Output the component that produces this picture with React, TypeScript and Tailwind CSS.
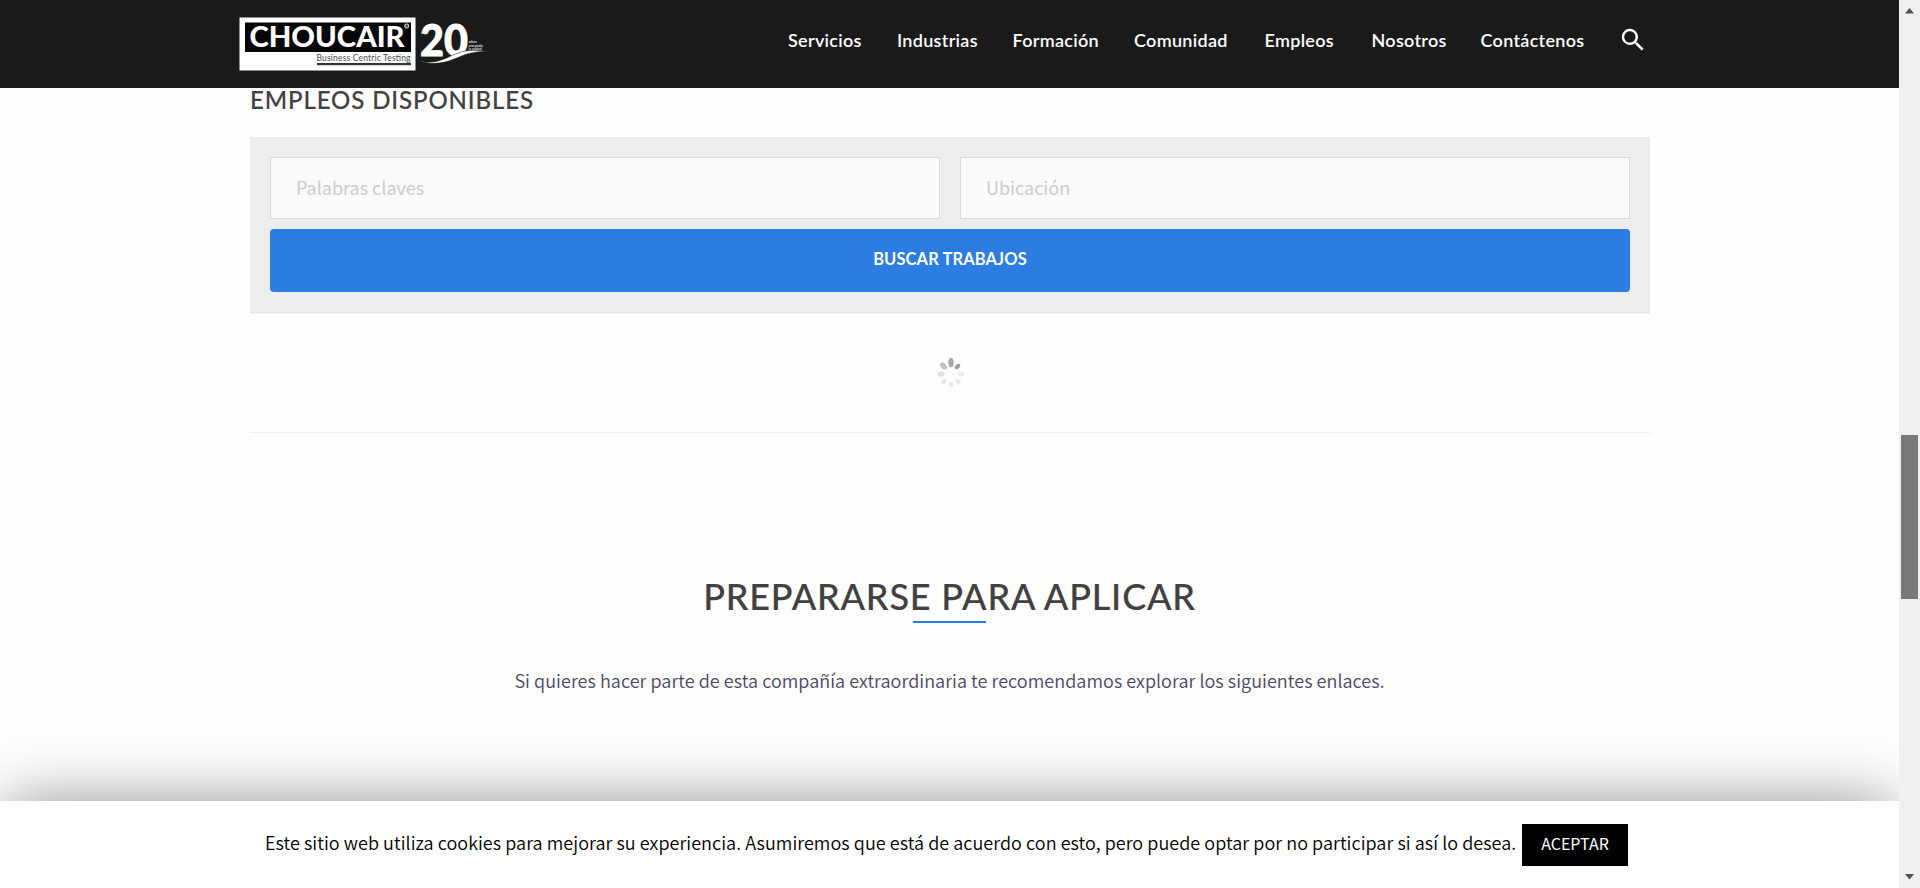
import React from "react";

const navItems = [
  { label: "Servicios", cls: "w-[74px]" },
  { label: "Industrias", cls: "w-[80.5px]" },
  { label: "Formación", cls: "w-[86.5px]" },
  { label: "Comunidad", cls: "w-[95.5px]" },
  { label: "Empleos", cls: "w-[72px]" },
  { label: "Nosotros", cls: "w-[74px]" },
  { label: "Contáctenos", cls: "w-[105px]" },
];

function Logo() {
  return (
    <svg width="250" height="60" viewBox="236 14 250 60" role="img" aria-label="Choucair">
      <rect x="239.500" y="17.500" width="176" height="53" fill="#fff" />
      <rect x="245" y="22.500" width="166" height="29.500" fill="#050608" />
      <text x="249.500" y="47.300" fontFamily="Lato, sans-serif" fontWeight="900" fontSize="29" fill="#fff" textLength="155" lengthAdjust="spacingAndGlyphs">CHOUCAIR</text>
      <circle cx="406.700" cy="26" r="2.100" fill="#555" stroke="#fff" strokeWidth="0.800" />
      <text x="316.500" y="60.500" fontFamily="Lato, sans-serif" fontSize="8.500" fill="#4a4a4a" textLength="94" lengthAdjust="spacing">Business Centric Testing</text>
      <rect x="317" y="63" width="94" height="2.200" fill="#333" />
      <text x="420" y="56" fontFamily="Lato, sans-serif" fontWeight="900" fontSize="43" fill="#fff" stroke="#fff" strokeWidth="0.800" textLength="48" lengthAdjust="spacingAndGlyphs">20</text>
      <path d="M418 60.500 C431 65 443 60 453 55 C465 49.500 476 49.500 487 51.500 C472 51 464 55 454 59 C441 64.500 428 64.500 418 60.500Z" fill="#fff" stroke="#1a1a1a" strokeWidth="0.500" />
      <g fill="#ddd" fontFamily="Lato, sans-serif" fontSize="4" fontWeight="700">
        <text x="468.500" y="42.500">años</text>
        <text x="468.500" y="46.500">creando</text>
        <text x="468.500" y="50" textLength="13" lengthAdjust="spacingAndGlyphs">la calidad</text>
      </g>
    </svg>
  );
}

function Spinner() {
  return (
    <svg width="30" height="34" viewBox="-15 -17 30 34" className="block">
      <ellipse cx="0" cy="-10.300" rx="2.700" ry="4.600" fill="#a8a8a8" />
      <ellipse cx="0" cy="0" rx="2" ry="3.200" fill="#9e9e9e" transform="translate(6.500 -6.500) rotate(45)" />
      <ellipse cx="0" cy="0" rx="2.500" ry="3.200" fill="#ebebeb" transform="translate(10 1) rotate(90)" />
      <ellipse cx="0" cy="0" rx="2.300" ry="3.200" fill="#e9e9e9" transform="translate(7 8.500) rotate(140)" />
      <ellipse cx="0" cy="11.500" rx="2.400" ry="3" fill="#e9e9e9" />
      <ellipse cx="0" cy="0" rx="2.300" ry="3.200" fill="#e6e6e6" transform="translate(-7 8.500) rotate(40)" />
      <ellipse cx="0" cy="0" rx="2.600" ry="3.500" fill="#dfdfdf" transform="translate(-10 1) rotate(90)" />
      <ellipse cx="0" cy="0" rx="2.600" ry="4.200" fill="#c0c0c0" transform="translate(-7.500 -7) rotate(-42)" />
    </svg>
  );
}

const field =
  "h-[62px] w-[670px] border border-[#d9d9d9] bg-[#fafafa] px-[25px] pb-[2px] text-[18px] outline-none placeholder:text-[#cccccc] placeholder:opacity-100";

export default function App() {
  return (
    <div className="flex h-[888px] w-[1920px] overflow-hidden bg-[#fefefe] font-['Noto_Sans_CJK_SC',sans-serif]">
      <div className="flex w-[1899px] flex-col overflow-hidden">
        <header className="z-10 flex h-[88px] shrink-0 items-start bg-[#1a1a1a] pl-[236px] pt-[14px]">
          <Logo />
          <nav className="ml-[302px] mt-[13px] flex gap-[35px] whitespace-nowrap font-['Lato',sans-serif] text-[18px] leading-[27px] font-semibold tracking-[0.3px] text-white">
            {navItems.map((item) => (
              <a key={item.label} href="#" className={item.cls}>
                {item.label}
              </a>
            ))}
          </nav>
          <svg className="ml-[32px] mt-[11px]" width="30" height="30" viewBox="0 0 24 24" fill="#fff">
            <path d="M15.500 14h-.790l-.280-.270A6.471 6.471 0 0 0 16 9.500 6.500 6.500 0 1 0 9.500 16c1.610 0 3.090-.590 4.230-1.570l.270.280v.790l5 4.990L20.490 19l-4.990-5zm-6 0C7.010 14 5 11.990 5 9.500S7.010 5 9.500 5 14 7.010 14 9.500 11.990 14 9.500 14z" />
          </svg>
        </header>

        <main className="flex h-[713px] shrink-0 flex-col">
          <section className="ml-[250px] w-[1400px]">
            <h3 className="h-[49px] whitespace-nowrap font-['Lato',sans-serif] text-[24px] leading-[23px] font-medium tracking-[0.9px] text-[#434040] [-webkit-text-stroke:0.15px_#434040]">
              EMPLEOS DISPONIBLES
            </h3>
            <form className="h-[177px] border-b border-[#f0f0f0] bg-[#ededed]">
              <div className="flex h-[176px] flex-col gap-[10px] border-b border-[#e4e4e4] px-[20px] pt-[20px]">
                <div className="flex gap-[20px]">
                  <input className={field} placeholder="Palabras claves" />
                  <input className={field} placeholder="Ubicación" />
                </div>
                <button type="button" className="h-[63px] rounded-[4px] bg-[#2b7de1] pb-[3px] font-['Lato',sans-serif] text-[16.5px] font-bold tracking-[0.1px] text-white">
                  BUSCAR TRABAJOS
                </button>
              </div>
            </form>
            <div className="flex h-[119px] justify-center border-b border-[#eeeeee] pl-[2px] pt-[42px]">
              <Spinner />
            </div>
          </section>

          <section className="flex flex-col items-center">
            <h2 className="mt-[143px] h-[45px] whitespace-nowrap font-['Lato',sans-serif] text-[36px] leading-[40px] font-medium tracking-[0.82px] text-[#434040] [-webkit-text-stroke:0.15px_#434040]">
              PREPARARSE PARA APLICAR
            </h2>
            <div className="h-[2px] w-[73px] bg-[#2b7de1]" />
            <p className="mt-[43px] whitespace-nowrap text-[18px] leading-[28px] font-[350] tracking-[0.046px] text-[#4b4763]">
              Si quieres hacer parte de esta compañía extraordinaria te recomendamos explorar los siguientes enlaces.
            </p>
          </section>
        </main>

        <footer className="flex h-[87px] shrink-0 items-start bg-white pl-[265px] pt-[23px] text-black shadow-[0_0_66px_-6px_rgba(0,0,0,0.5)]">
          <p className="w-[1257px] whitespace-nowrap text-[18px] leading-[36px] font-[350] tracking-[0.047px]">
            Este sitio web utiliza cookies para mejorar su experiencia. Asumiremos que está de acuerdo con esto, pero puede optar por no participar si así lo desea.
          </p>
          <button type="button" className="h-[42px] w-[106px] bg-black pb-[4px] text-[16px] leading-[38px] text-white">
            ACEPTAR
          </button>
        </footer>
      </div>

      <aside className="flex w-[21px] flex-col items-center justify-between bg-[#f0f0f0] pt-[8px] pb-[8px]">
        <svg width="9" height="6" viewBox="0 0 9 6"><path d="M0 5.500L4.500 0L9 5.500Z" fill="#505050" /></svg>
        <div className="mt-[145px] h-[164px] w-[17px] bg-[#787878]" />
        <svg width="9" height="6" viewBox="0 0 9 6"><path d="M0 0L4.500 5.500L9 0Z" fill="#505050" /></svg>
      </aside>
    </div>
  );
}
